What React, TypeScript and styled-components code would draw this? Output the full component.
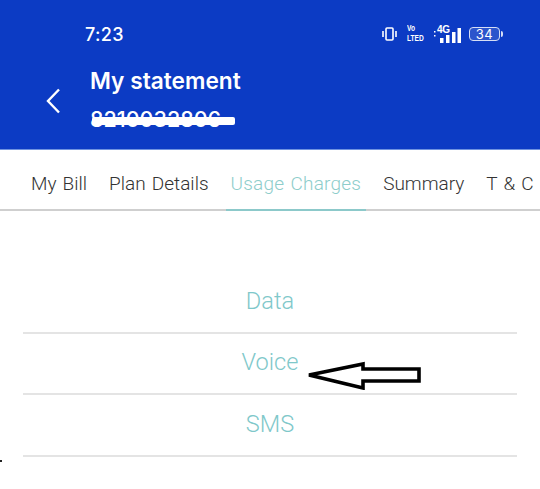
import styled, { createGlobalStyle } from "styled-components";

const GlobalStyle = createGlobalStyle`
    html, body {
        margin: 0;
        padding: 0;
        background: #fff;
    }
`;

const Page = styled.div`
    position: relative;
    width: 540px;
    height: 489px;
    overflow: hidden;
    background: #fff;
    font-family: "Liberation Sans", Arial, sans-serif;
`;

const Header = styled.header`
    height: 149px;
    background: #0c3bc4;
    border-bottom: 1px solid #6f93e0;
    color: #fff;
    font-family: Inter, sans-serif;
`;

const StatusBar = styled.div`
    display: flex;
    align-items: center;
    justify-content: space-between;
    height: 20px;
    padding: 24px 37px 0 85px;
`;

const Time = styled.span`
    font-size: 18px;
    font-weight: 500;
    letter-spacing: 0.3px;
`;

const StatusIcons = styled.div`
    display: flex;
    align-items: center;
    gap: 10px;
`;

const Lte = styled.div`
    width: 17px;
    font-family: "Liberation Sans", sans-serif;
    font-size: 8.5px;
    font-weight: 700;
    line-height: 9.8px;
    transform: scaleX(0.78);
    transform-origin: left center;
    white-space: nowrap;
`;

const LteLine = styled.div``;

const NetworkGroup = styled.div`
    position: relative;
    display: flex;
    align-items: flex-end;
    width: 27px;
    height: 18px;
    margin-right: -2px;
`;

const NetworkLabel = styled.span`
    position: absolute;
    top: -1px;
    left: 3px;
    font-family: "Liberation Sans", sans-serif;
    font-size: 10px;
    line-height: 11px;
    font-weight: 700;
    letter-spacing: -0.3px;
`;

const Battery = styled.div`
    position: relative;
    display: flex;
    align-items: center;
    justify-content: center;
    width: 29px;
    height: 12px;
    margin-right: 3px;
    border: 1px solid #d6def5;
    border-radius: 4px;
    background: #2c55cc;
    font-size: 13px;
    letter-spacing: 0.5px;

    &::after {
        content: "";
        position: absolute;
        right: -4px;
        top: 3px;
        width: 2px;
        height: 6px;
        border-radius: 0 2px 2px 0;
        background: #d6def5;
    }
`;

const TitleRow = styled.div`
    display: flex;
    align-items: center;
    padding: 24px 0 0 46px;
    gap: 28px;
`;

const BackIcon = styled.svg`
    margin-top: 3px;
`;

const TitleBlock = styled.div`
    display: flex;
    flex-direction: column;
    gap: 13px;
`;

const Title = styled.h1`
    margin: 0;
    font-size: 22.7px;
    line-height: 26px;
    font-weight: 600;
    white-space: nowrap;
`;

const NumberLine = styled.div`
    position: relative;
    font-size: 21.5px;
    line-height: 24px;
    font-weight: 500;
`;

const Redaction = styled.span`
    position: absolute;
    left: 2px;
    top: 10px;
    width: 143px;
    height: 8px;
    border-radius: 2px;
    background: #fff;
`;

const Tabs = styled.nav`
    display: flex;
    align-items: stretch;
    height: 61px;
    padding-left: 26px;
    border-bottom: 2px solid #cfcfcf;
    box-sizing: border-box;
`;

const Tab = styled.div<{ $active?: boolean }>`
    display: flex;
    align-items: center;
    padding: 8px 5px 0;
    margin-right: 12px;
    margin-bottom: -2px;
    font-family: Roboto, sans-serif;
    font-weight: 300;
    font-size: 19px;
    word-spacing: 1.5px;
    letter-spacing: ${(p) => (p.$active ? "0.2px" : "0")};
    white-space: nowrap;
    color: ${(p) => (p.$active ? "#8ecdcb" : "#333")};
    border-bottom: 2px solid ${(p) => (p.$active ? "#8cc9ca" : "transparent")};
`;

const List = styled.ul`
    list-style: none;
    margin: 61px 23px 0;
    padding: 0;
`;

const Item = styled.li`
    height: 61.5px;
    display: flex;
    align-items: center;
    justify-content: center;
    box-sizing: border-box;
    padding-bottom: 2px;
    border-bottom: 2px solid #e4e4e4;
    font-family: Roboto, sans-serif;
    font-weight: 300;
    font-size: 23.6px;
    color: #7fc8ca;
`;

const Arrow = styled.svg`
    position: absolute;
    left: 305px;
    top: 358px;
`;

const Speck = styled.span`
    position: absolute;
    left: 0;
    top: 460px;
    width: 2px;
    height: 2px;
    background: #222;
`;

const VibrateIcon = () => (
    <svg width="15" height="14" viewBox="0 0 15 14" fill="none" stroke="#fff" strokeWidth="1.6">
        <rect x="4" y="1" width="7" height="12" rx="1" />
        <path d="M1 4v6M14 4v6" />
    </svg>
);

const SignalBars = () => (
    <svg width="27" height="18" viewBox="0 0 27 18" fill="#fff">
        <rect x="0" y="6" width="1.5" height="1.5" />
        <rect x="0" y="10" width="1.5" height="1.5" />
        <rect x="6" y="13" width="3.5" height="5" />
        <rect x="12" y="10" width="3.5" height="8" />
        <rect x="18" y="7" width="3.5" height="11" />
        <rect x="23.5" y="3" width="3.5" height="15" />
    </svg>
);

const tabs = ["My Bill", "Plan Details", "Usage Charges", "Summary", "T & C"];
const rows = ["Data", "Voice", "SMS"];

const App = () => {
    return (
        <Page>
            <GlobalStyle />
            <Header>
                <StatusBar>
                    <Time>7:23</Time>
                    <StatusIcons>
                        <VibrateIcon />
                        <Lte>
                            <LteLine>Vo</LteLine>
                            <LteLine>LTED</LteLine>
                        </Lte>
                        <NetworkGroup>
                            <NetworkLabel>4G</NetworkLabel>
                            <SignalBars />
                        </NetworkGroup>
                        <Battery>34</Battery>
                    </StatusIcons>
                </StatusBar>
                <TitleRow>
                    <BackIcon width="16" height="26" viewBox="0 0 16 26" fill="none" stroke="#fff" strokeWidth="2.4">
                        <path d="M13 1.5 2 13l11 11.5" />
                    </BackIcon>
                    <TitleBlock>
                        <Title>My statement</Title>
                        <NumberLine>
                            8210032806
                            <Redaction />
                        </NumberLine>
                    </TitleBlock>
                </TitleRow>
            </Header>
            <Tabs>
                {tabs.map((t) => (
                    <Tab key={t} $active={t === "Usage Charges"}>
                        {t}
                    </Tab>
                ))}
            </Tabs>
            <List>
                {rows.map((r) => (
                    <Item key={r}>{r}</Item>
                ))}
            </List>
            <Arrow width="118" height="32" viewBox="0 0 118 32" fill="#fff" stroke="#000" strokeWidth="3.6">
                <path d="M4 17 58 6v5h56v12H58v7z" />
            </Arrow>
            <Speck />
        </Page>
    );
};

export default App;
